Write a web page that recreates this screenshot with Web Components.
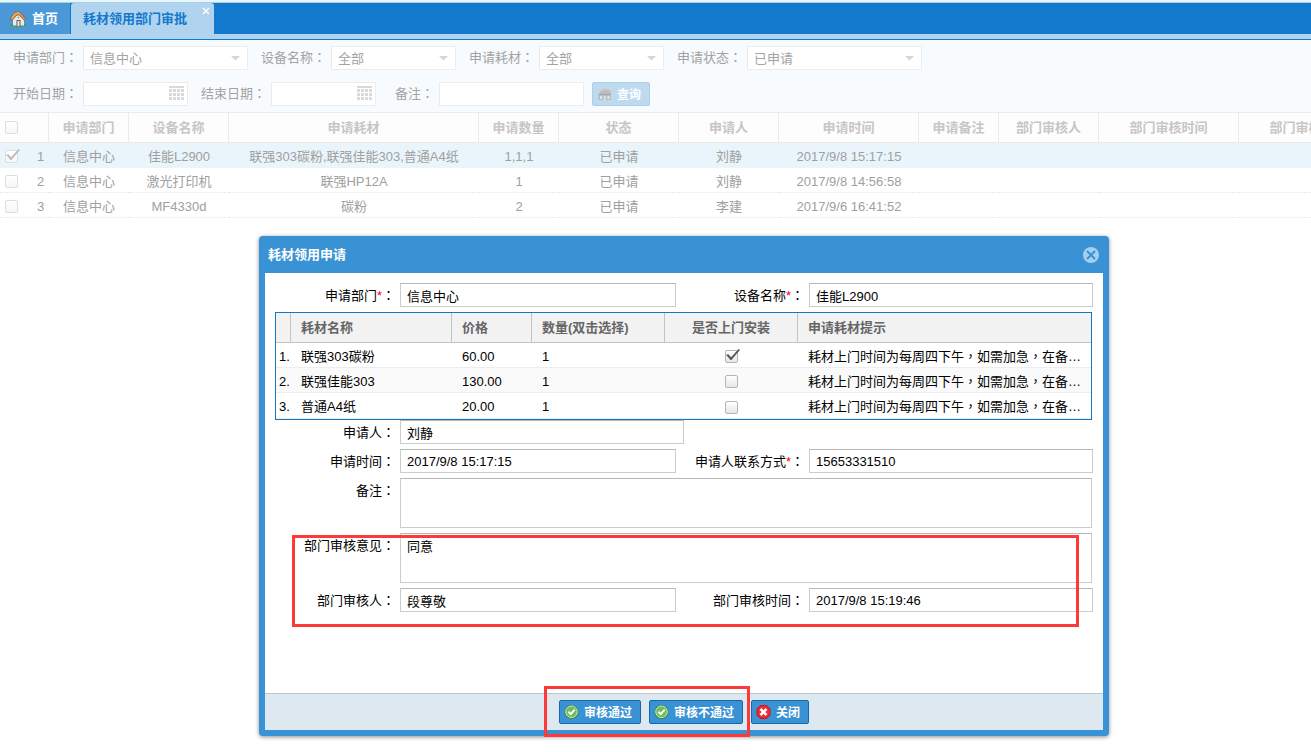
<!DOCTYPE html>
<html lang="zh-CN">
<head>
<meta charset="utf-8">
<title>耗材领用部门审批</title>
<style>
  body { margin: 0; min-height: 100vh; background: #fff; overflow: hidden;
    font: 13px/18px "Liberation Sans", "Noto Sans CJK SC", sans-serif; }
</style>
</head>
<body>
<supply-app></supply-app>
<script>
const FONT = '"Liberation Sans", "Noto Sans CJK SC", sans-serif';

// Full-width punctuation is set centred in its cell.
const punct = s => s.replace(/[：，]/g, c => `<span class="p" lang="zh-TW">${c}</span>`);

const BASE = `
  *, *::before, *::after { box-sizing: border-box; }
  .p { font-family: "Noto Sans CJK TC", sans-serif; line-height: 1; }
  input, select, textarea, button { font: inherit; margin: 0; outline: 0; }
`;
const CHECK = `
  input[type=checkbox] { appearance: none; display: block; position: relative; width: 13px; height: 13px;
    border: 1px solid var(--box, #b5b5b5); border-radius: 2px;
    background: linear-gradient(#fff, var(--box-fill, #e6e6e6)); }
  input[type=checkbox]:checked::after { content: ""; position: absolute; left: 0; top: -2px; width: 14px; height: 12px;
    background: var(--tick, #5a5a5a);
    clip-path: polygon(0 48%, 17% 44%, 36% 68%, 90% 0, 100% 8%, 39% 92%, 32% 92%); }
`;

function define(name, css, html) {
  customElements.define(name, class extends HTMLElement {
    connectedCallback() {
      if (this.shadowRoot) return;
      const root = this.attachShadow({ mode: 'open' });
      root.innerHTML = `<style>${BASE}${css}</style>` + (typeof html === 'function' ? html(this) : html);
    }
  });
}

const ICONS = {
  ok: `<svg width="16" height="16" viewBox="0 0 16 16"><circle cx="7.500" cy="8" r="7" fill="#2f8a35"/><circle cx="7.500" cy="7.800" r="5.800" fill="#6fbb5e" stroke="#d3ecc9"/><path d="M4.400 7.800l2.300 2.300 4-4.400" fill="none" stroke="#fff" stroke-width="2"/></svg>`,
  no: `<svg width="16" height="16" viewBox="0 0 16 16"><path d="M4.500 1h6l4 4v6l-4 4h-6l-4-4V5z" fill="#d3121c"/><path d="M5 2h5l3.500 3.500v5L10 14H5l-3.500-3.500v-5z" fill="#ee2a32"/><path d="M4.500 5l6 6M10.500 5l-6 6" stroke="#fff" stroke-width="2.600"/></svg>`,
  find: `<svg width="16" height="16" viewBox="0 0 16 16"><path d="M4 5c1-3 8-3 9 0l1.500 3H14v6H1.500V8H1z" fill="#b9bcc1"/><path d="M4 5c1-2.500 8-2.500 9 0" fill="none" stroke="#dcc4c8" stroke-width="1.500"/><path d="M2 8.500h11.500" stroke="#a3a6ab"/><rect x="3" y="10" width="2" height="3" fill="#e3e6e8"/><rect x="10.500" y="10" width="2" height="3" fill="#e3e6e8"/><rect x="6.500" y="10" width="2.500" height="4" fill="#c9dfee"/></svg>`
};

define('action-button', `
  :host { display: block; }
  button { display: flex; align-items: center; gap: 4px; height: 24px; padding: 0 8px 0 4px;
    font: bold 12px/16px ${FONT}; color: #fff; white-space: nowrap;
    border: 1px solid #1468a8; border-radius: 2px; background: #3892d3; }
  svg { flex: none; }
  span { padding-top: 2px; }
  :host([muted]) button { border-color: #aacfe9; background: #bddaef; }
`, el => `<button type="button">${ICONS[el.getAttribute('icon')]}<span><slot></slot></span></button>`);

define('tab-item', `
  :host { display: block; }
  button { display: flex; align-items: center; gap: 4px; position: relative; height: 31px; padding: 0 12px 0 9px; border: 0;
    border-right: 1px solid #1279cc; background: #4a98d8; color: #fff; font-weight: bold; white-space: nowrap; }
  :host([active]) button { height: 36px; padding: 0 27px 5px 12px; border: 0; background: #b0d4ef; color: #1279cc;
    border-radius: 3px 3px 0 0; }
  .x { position: absolute; right: 4px; top: 4px; }
`, el => `<button type="button" role="tab">${el.hasAttribute('home') ? `
  <svg width="19" height="16" viewBox="0 0 19 16"><ellipse cx="9" cy="14" rx="8" ry="1.800" fill="#4c9a3b"/><path d="M4 8v6.500h11V8L9.500 3z" fill="#e9eaec"/><path d="M1 8L6 1h5l6 7-1.500 1.500L10 4 8 4 3 9.500z" fill="#d39650" stroke="#8b5523" stroke-width=".7"/><path d="M6 2.500L3 7M7.500 2h3" stroke="#efc68c" fill="none"/><path d="M7.500 9h4v6h-4z" fill="#6f5a48"/><path d="M8.500 10h2v5h-2z" fill="#f3efe8"/><circle cx="9.500" cy="6.500" r="1" fill="#78a7c8"/></svg>` : ''}
  <slot></slot>${el.hasAttribute('active') ? `
  <svg class="x" width="8" height="8" viewBox="0 0 8 8"><path d="M1 1l6 6M7 1L1 7" stroke="#fff" stroke-width="1.300"/></svg>` : ''}</button>`);

define('tab-strip', `
  :host { display: block; border-top: 2px solid #e6f6fa; }
  nav { display: flex; height: 38px; border-top: 1px solid #a9cfe0; border-bottom: 1px solid #1279cc;
    background: linear-gradient(#1279cc 31px, #b0d4ef 31px); }
`, `<nav role="tablist"><slot></slot></nav>`);

// Labelled filter control: kind is "select", "date" or "text".
define('filter-field', `
  :host { display: flex; align-items: center; color: #a3a3a3; }
  label { width: var(--label, 70px); padding-right: 5px; text-align: right; white-space: nowrap; }
  .box { display: grid; align-items: center; width: var(--control); height: 24px; border: 1px solid #ececec; background: #fff; }
  .box > * { grid-area: 1 / 1; }
  input, select { appearance: none; width: 100%; height: 22px; padding: 2px 6px 0; border: 0; background: none; color: #a3a3a3; }
  svg { justify-self: end; pointer-events: none; }
`, el => {
  const kind = el.getAttribute('kind');
  const cells = [0, 1, 2, 3].flatMap(c => [0, 1, 2].map(r => `<rect x="${c * 4}" y="${3 + r * 4}" width="3" height="3"/>`)).join('');
  return `<label for="c">${punct(el.getAttribute('label'))}</label><div class="box" style="width:${el.getAttribute('width')}px">` +
    (kind === 'select' ? `<select id="c"><option>${el.getAttribute('value')}</option></select><svg width="19" height="6" viewBox="0 0 19 6"><path d="M3 1h9L7.500 5.500z" fill="#d6d6d6"/></svg>`
    : `<input id="c" type="text">` + (kind === 'date' ? `<svg width="18" height="16" viewBox="0 0 18 16" fill="#d9d9d9"><rect width="15" height="2"/>${cells}</svg>` : '')) + `</div>`;
});

define('search-toolbar', `
  :host { display: flex; flex-direction: column; gap: 12px; padding: 6px 13px; background: #f7fbfd; }
  .row { display: flex; gap: 13px; }
  .short { --label: 50px; }
  .pair { display: flex; gap: 8px; }
`, `
  <div class="row">
    <filter-field kind="select" label="申请部门：" value="信息中心" width="165"></filter-field>
    <filter-field kind="select" label="设备名称：" value="全部" width="125"></filter-field>
    <filter-field kind="select" label="申请耗材：" value="全部" width="125"></filter-field>
    <filter-field kind="select" label="申请状态：" value="已申请" width="175"></filter-field>
  </div>
  <div class="row">
    <filter-field kind="date" label="开始日期：" width="105"></filter-field>
    <filter-field kind="date" label="结束日期：" width="105"></filter-field>
    <div class="pair">
      <filter-field class="short" kind="text" label="备注：" width="145"></filter-field>
      <action-button icon="find" muted>查询</action-button>
    </div>
  </div>`);

const COLS = [['申请部门', 80], ['设备名称', 100], ['申请耗材', 250], ['申请数量', 80], ['状态', 120], ['申请人', 100],
  ['申请时间', 140], ['申请备注', 80], ['部门审核人', 100], ['部门审核时间', 140], ['部门审核意见', 140]];
const ROWS = [
  ['信息中心', '佳能L2900', '联强303碳粉,联强佳能303,普通A4纸', '1,1,1', '已申请', '刘静', '2017/9/8 15:17:15'],
  ['信息中心', '激光打印机', '联强HP12A', '1', '已申请', '刘静', '2017/9/8 14:56:58'],
  ['信息中心', 'MF4330d', '碳粉', '2', '已申请', '李建', '2017/9/6 16:41:52']];

define('request-grid', CHECK + `
  :host { display: block; overflow: hidden; border-top: 1px solid #ebebeb; color: #a0a0a0;
    --box: #dedede; --box-fill: #f6f6f6; --tick: #bdbdbd; }
  table { width: 1379px; table-layout: fixed; border-collapse: separate; border-spacing: 0; }
  th, td { padding: 0; text-align: center; white-space: nowrap; }
  th { height: 30px; color: #c6c6c6; border-right: 1px solid #ebebeb; border-bottom: 1px solid #ebebeb; background: #fefdfd; }
  td { height: 25px; padding-top: 3px; border-bottom: 1px dotted #e6e6e6; }
  th:first-child { border-right: 0; }
  th:first-child, td:first-child { padding-left: 5px; }
  .on td { background: #e9f5fb; border-bottom-color: #e9f5fb; }
`, `<table>
  <colgroup><col style="width:32px"><col style="width:17px">${COLS.map(c => `<col style="width:${c[1]}px">`).join('')}</colgroup>
  <thead><tr><th><input type="checkbox" aria-label="全选"></th><th></th>${COLS.map(c => `<th>${c[0]}</th>`).join('')}</tr></thead>
  <tbody>${ROWS.map((r, i) => `<tr class="${i ? '' : 'on'}"><td><input type="checkbox" aria-label="选择第${i + 1}行" ${i ? '' : 'checked'}></td><td>${i + 1}</td>${COLS.map((c, j) => `<td>${r[j] || ''}</td>`).join('')}</tr>`).join('')}</tbody>
</table>`);

define('form-field', `
  :host { display: flex; align-items: flex-start; gap: 5px; color: #000; }
  label { flex: none; width: var(--label, 120px); line-height: 26px; height: 24px; text-align: right; white-space: nowrap; }
  i { font-style: normal; color: #f00; }
  input, textarea { display: block; flex: 1; min-width: 0; height: 24px; padding: 0 6px; color: #000;
    border: 1px solid #c9cdcb; border-top-color: #b5b8b6; border-radius: 0; background: #fff; }
  textarea { height: 50px; padding: 4px 6px; line-height: 18px; resize: none; }
`, el => {
  const v = el.getAttribute('value') || '';
  return `<label for="c">${el.getAttribute('label')}${el.hasAttribute('required') ? '<i>*</i>' : ''}${punct('：')}</label>` +
    (el.hasAttribute('multiline') ? `<textarea id="c">${v}</textarea>` : `<input id="c" type="text" value="${v}">`);
});

const TIP = punct('耗材上门时间为每周四下午，如需加急，在备') + '…';
define('supply-table', CHECK + `
  :host { display: block; border: 1px solid #1279c0; color: #000; }
  table { width: 100%; table-layout: fixed; border-collapse: separate; border-spacing: 0; }
  th, td { padding: 0 0 0 10px; text-align: left; white-space: nowrap; overflow: hidden; }
  th { height: 30px; color: #666; border-right: 1px solid #c3c3c3; border-bottom: 1px solid #c3c3c3; background: #f2f2f2; }
  th:last-child { border-right: 0; }
  td { height: 25px; padding-top: 3px; border-bottom: 1px solid #ededed; }
  tr:nth-child(even) td { background: #fafafa; }
  tr:last-child td { height: 26px; }
  td:first-child { padding-left: 3px; }
  th.c { text-align: center; padding: 0; }
  td.c { padding: 3px 0 0; }
  td input[type=checkbox] { margin: 0 auto; }
`, `<table>
  <colgroup><col style="width:15px"><col style="width:161px"><col style="width:80px"><col style="width:133px"><col style="width:133px"><col></colgroup>
  <thead><tr><th></th><th>耗材名称</th><th>价格</th><th>数量(双击选择)</th><th class="c">是否上门安装</th><th>申请耗材提示</th></tr></thead>
  <tbody>${[['联强303碳粉', '60.00'], ['联强佳能303', '130.00'], ['普通A4纸', '20.00']].map((r, i) =>
    `<tr><td>${i + 1}.</td><td>${r[0]}</td><td>${r[1]}</td><td>1</td><td class="c"><input type="checkbox" aria-label="是否上门安装" ${i ? '' : 'checked'}></td><td>${TIP}</td></tr>`).join('')}</tbody>
</table>`);

define('dialog-window', `
  :host { display: block; padding: 0 6px 6px; border-radius: 4px; background: #3892d3; box-shadow: 0 1px 4px rgba(0,0,0,.45); }
  header { display: flex; align-items: center; justify-content: space-between; height: 37px; padding: 0 4px 0 3px; color: #fff; }
  h2 { margin: 0; font: inherit; font-weight: bold; }
  header button { display: block; padding: 0; border: 0; background: none; }
  header svg { display: block; }
  main { min-height: 420px; padding: 10px; background: #fff; }
  footer { display: flex; justify-content: center; gap: 8px; padding: 6px; border-top: 1px solid #bfc5c9; background: #dde8f1; }
`, el => `<header><h2>${el.getAttribute('heading')}</h2>
    <button type="button" aria-label="关闭窗口"><svg width="16" height="16" viewBox="0 0 16 16"><circle cx="8" cy="8" r="8" fill="#a5cfec"/><path d="M4 4l8 8M12 4l-8 8" stroke="#3892d3" stroke-width="2"/></svg></button></header>
  <main><slot></slot></main>
  <footer><slot name="actions"></slot></footer>`);

define('request-form', `
  :host { display: grid; grid-template-columns: minmax(0, 1fr) 412px; gap: 5px; }
  .second { --label: 123px; }
  .wide { grid-column: 1 / -1; }
  .applicant { width: 409px; }
  .block { grid-column: 1 / -1; display: flex; flex-direction: column; }
  .wide, .block { margin-right: 1px; }
`, `
  <form-field label="申请部门" required value="信息中心"></form-field>
  <form-field class="second" label="设备名称" required value="佳能L2900"></form-field>
  <div class="block">
    <supply-table></supply-table>
    <form-field class="applicant" label="申请人" value="刘静"></form-field>
  </div>
  <form-field label="申请时间" value="2017/9/8 15:17:15"></form-field>
  <form-field class="second" label="申请人联系方式" required value="15653331510"></form-field>
  <form-field class="wide" label="备注" multiline></form-field>
  <form-field class="wide" label="部门审核意见" multiline value="同意"></form-field>
  <form-field label="部门审核人" value="段尊敬"></form-field>
  <form-field class="second" label="部门审核时间" value="2017/9/8 15:19:46"></form-field>`);

define('highlight-frame', `:host { display: block; box-sizing: border-box; border: 3px solid #fd3a38; pointer-events: none; }`, '');

define('supply-app', `
  :host { display: block; position: relative; min-height: 100vh; }
  .window { position: absolute; left: 259px; top: 236px; width: 850px; }
  dialog-window { width: 100%; box-sizing: border-box; }
  .review, .decision { position: absolute; }
  .review { left: 33px; top: 299px; width: 787px; height: 92px; }
  .decision { left: 285px; top: 450px; width: 206px; height: 51px; }
`, `
  <tab-strip><tab-item home>首页</tab-item><tab-item active>耗材领用部门审批</tab-item></tab-strip>
  <search-toolbar></search-toolbar>
  <request-grid></request-grid>
  <div class="window">
    <dialog-window heading="耗材领用申请">
      <request-form></request-form>
      <action-button slot="actions" icon="ok">审核通过</action-button>
      <action-button slot="actions" icon="ok">审核不通过</action-button>
      <action-button slot="actions" icon="no">关闭</action-button>
    </dialog-window>
    <highlight-frame class="review"></highlight-frame>
    <highlight-frame class="decision"></highlight-frame>
  </div>`);
</script>
</body>
</html>
